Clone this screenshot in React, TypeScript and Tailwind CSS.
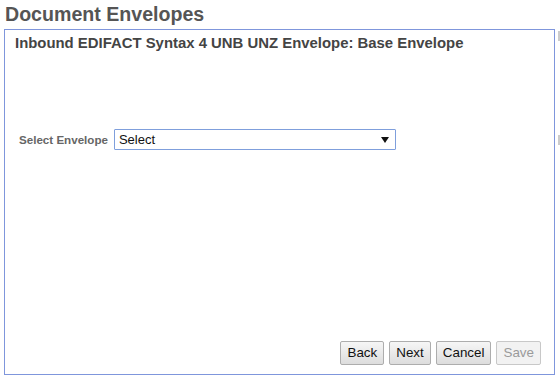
import React from "react";

export default function App() {
  return (
    <div className="w-[560px] h-[379px] bg-white relative overflow-hidden" style={{ fontFamily: '"Liberation Sans", Arial, sans-serif' }}>
      <div className="pl-[5px] pt-[2px] h-[29px] text-[19.6px] leading-[24px] font-bold text-[#555555]">Document Envelopes</div>
      <div className="ml-[4px] w-[551px] h-[346px] border border-[#7f96dc] flex flex-col">
        <div className="pl-[10px] pt-[5px] text-[14.9px] leading-[17px] font-bold text-[#444444]">
          Inbound EDIFACT Syntax 4 UNB UNZ Envelope: Base Envelope
        </div>
        <div className="mt-[77px] flex items-center pl-[14px]">
          <span className="text-[11.6px] font-bold text-[#666666] mr-[6px]">Select Envelope</span>
          <div className="w-[282px] h-[21px] border border-[#7f9fdc] rounded-[1px] flex items-center justify-between pl-[4px] pr-[6px] text-[13px] text-[#111]">
            <span>Select</span>
            <svg width="8" height="6" viewBox="0 0 8 6"><path d="M0 0H8L4 6Z" fill="#111" /></svg>
          </div>
        </div>
        <div className="flex-1" />
        <div className="flex justify-end gap-[5px] pr-[13px] pb-[9px] text-[13.4px]">
          <button className="h-[24px] px-[6px] border border-[#adadad] rounded-[2px] bg-gradient-to-b from-[#f6f6f6] to-[#dddddd] text-[#111]">Back</button>
          <button className="h-[24px] px-[6px] border border-[#adadad] rounded-[2px] bg-gradient-to-b from-[#f6f6f6] to-[#dddddd] text-[#111]">Next</button>
          <button className="h-[24px] px-[6px] border border-[#adadad] rounded-[2px] bg-gradient-to-b from-[#f6f6f6] to-[#dddddd] text-[#111]">Cancel</button>
          <button className="h-[24px] px-[6px] border border-[#c8c8c8] rounded-[2px] bg-[#f2f2f2] text-[#9a9a9a]">Save</button>
        </div>
      </div>
      <div className="absolute left-[558px] top-[31px] w-[2px] h-[10px] bg-[#cccccc]" />
      <div className="absolute left-[558px] top-[135px] w-[2px] h-[10px] bg-[#cccccc]" />
    </div>
  );
}
